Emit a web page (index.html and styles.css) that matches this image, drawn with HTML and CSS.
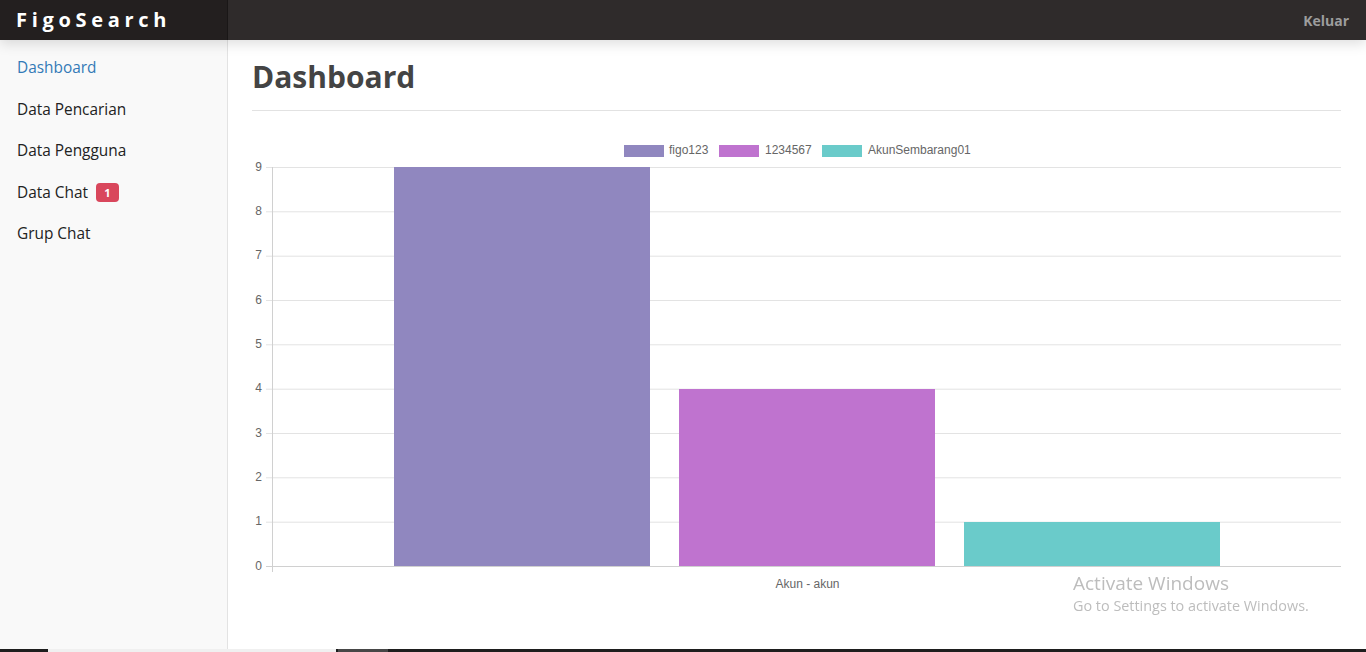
FILE: index.html
```html
<!DOCTYPE html>
<html lang="id">
<head>
<meta charset="utf-8">
<title>FigoSearch - Dashboard</title>
<link rel="stylesheet" href="styles.css">
</head>
<body>
<div class="app">
  <header class="navbar">
    <div class="brand">FigoSearch</div>
    <div class="nav-right"><a class="logout" href="#">Keluar</a></div>
  </header>
  <div class="body-row">
    <aside class="sidebar">
      <nav class="menu">
        <a class="menu-item active" href="#">Dashboard</a>
        <a class="menu-item" href="#">Data Pencarian</a>
        <a class="menu-item" href="#">Data Pengguna</a>
        <a class="menu-item" href="#">Data Chat <span class="badge">1</span></a>
        <a class="menu-item" href="#">Grup Chat</a>
      </nav>
    </aside>
    <main class="main">
      <h1 class="page-title">Dashboard</h1>
      <div class="chart-wrap">
        <svg class="chart" width="1089" height="470" viewBox="0 0 1089 470">
          <g class="legend">
            <rect x="372" y="15" width="40" height="12" fill="#9087bf"/>
            <text x="417" y="24">figo123</text>
            <rect x="467" y="15" width="40" height="12" fill="#bf73cf"/>
            <text x="513" y="24">1234567</text>
            <rect x="570" y="15" width="40" height="12" fill="#6acbca"/>
            <text x="616" y="24">AkunSembarang01</text>
          </g>
          <g class="grid">
            <line x1="14" y1="37.5" x2="1089" y2="37.5"/>
            <line x1="14" y1="81.8" x2="1089" y2="81.8"/>
            <line x1="14" y1="126.2" x2="1089" y2="126.2"/>
            <line x1="14" y1="170.5" x2="1089" y2="170.5"/>
            <line x1="14" y1="214.8" x2="1089" y2="214.8"/>
            <line x1="14" y1="259.2" x2="1089" y2="259.2"/>
            <line x1="14" y1="303.5" x2="1089" y2="303.5"/>
            <line x1="14" y1="347.8" x2="1089" y2="347.8"/>
            <line x1="14" y1="392.2" x2="1089" y2="392.2"/>
          </g>
          <g class="axis">
            <line x1="20.5" y1="37" x2="20.5" y2="442"/>
            <line x1="14" y1="436.5" x2="1089" y2="436.5"/>
          </g>
          <g class="ylabels">
            <text x="10" y="41">9</text>
            <text x="10" y="85">8</text>
            <text x="10" y="129">7</text>
            <text x="10" y="174">6</text>
            <text x="10" y="218">5</text>
            <text x="10" y="262">4</text>
            <text x="10" y="307">3</text>
            <text x="10" y="351">2</text>
            <text x="10" y="395">1</text>
            <text x="10" y="440">0</text>
          </g>
          <rect x="142" y="37" width="256" height="399" fill="#9087bf"/>
          <rect x="427" y="259" width="256" height="177" fill="#bf73cf"/>
          <rect x="712" y="392" width="256" height="44" fill="#6acbca"/>
          <text class="xlabel" x="555.5" y="458">Akun - akun</text>
        </svg>
      </div>
    </main>
  </div>
</div>
<div class="watermark">
  <div class="wm-title">Activate Windows</div>
  <div class="wm-sub">Go to Settings to activate Windows.</div>
</div>
<div class="taskbar">
  <span class="tb-a"></span><span class="tb-b"></span><span class="tb-c"></span>
</div>
</body>
</html>
```
FILE: styles.css
```css
* { box-sizing: border-box; }
html, body { margin: 0; padding: 0; height: 100%; }
body {
  font-family: "Comic Sans MS", "Open Sans", sans-serif;
  background: #fff;
  color: #333;
  overflow: hidden;
}
.app {
  display: flex;
  flex-direction: column;
  height: 100vh;
}
.navbar {
  height: 40px;
  flex: 0 0 40px;
  display: flex;
  background: #2f2b2b;
  position: relative;
  z-index: 2;
  box-shadow: 0 4px 12px rgba(0,0,0,0.13);
}
.brand {
  width: 228px;
  background: #231f1f;
  border-right: 1px solid #1a1717;
  color: #fff;
  font-weight: 700;
  font-size: 20px;
  letter-spacing: 4.7px;
  line-height: 40px;
  padding-left: 16px;
}
.nav-right {
  flex: 1;
  display: flex;
  justify-content: flex-end;
  align-items: center;
  padding-right: 17px;
}
.logout {
  color: #9d9d9d;
  font-weight: 700;
  font-size: 14px;
  text-decoration: none;
}
.body-row {
  flex: 1;
  display: flex;
  min-height: 0;
}
.sidebar {
  width: 228px;
  flex: 0 0 228px;
  background: #f9f9f9;
  border-right: 1px solid #e3e3e3;
  padding-top: 7px;
}
.menu { display: flex; flex-direction: column; }
.menu-item {
  display: flex;
  align-items: center;
  height: 41.5px;
  padding-left: 17px;
  font-size: 15.4px;
  color: #222;
  text-decoration: none;
}
.menu-item.active { color: #337ab7; }
.badge {
  display: inline-block;
  margin-left: 8px;
  background: #d9475c;
  color: #fff;
  font-size: 11px;
  font-weight: 700;
  border-radius: 4px;
  width: 23px;
  height: 19px;
  line-height: 19px;
  text-align: center;
}
.main {
  flex: 1;
  padding: 17px 25px 0 24px;
  min-width: 0;
}
.page-title {
  margin: 0;
  font-size: 30px;
  line-height: 40px;
  font-weight: 700;
  color: #444;
  padding-bottom: 13px;
  border-bottom: 1px solid #e2e2e2;
}
.chart-wrap {
  margin-top: 19px;
}
.chart { display: block; font-family: "Liberation Sans", Arial, sans-serif; }
.chart text { font-size: 12px; fill: #666; }
.grid line { stroke: #e3e3e3; stroke-width: 1; }
.axis line { stroke: #d0d0d0; stroke-width: 1; }
.ylabels text { text-anchor: end; }
.xlabel { text-anchor: middle; }
.watermark {
  position: fixed;
  left: 1073px;
  top: 571px;
  color: #bdbdbd;
  font-family: "Open Sans", "Noto Sans", sans-serif;
  pointer-events: none;
}
.wm-title { font-size: 19px; line-height: 24px; }
.wm-sub { font-size: 14.4px; line-height: 22px; }
.taskbar {
  position: fixed;
  left: 0; right: 0; bottom: 0;
  height: 3px;
  background: #1e1e1e;
  display: flex;
}
.tb-a { width: 48px; }
.tb-b { width: 288px; background: #f0f0f0; }
.tb-c { width: 50px; margin-left: 2px; background: #474747; }
```
